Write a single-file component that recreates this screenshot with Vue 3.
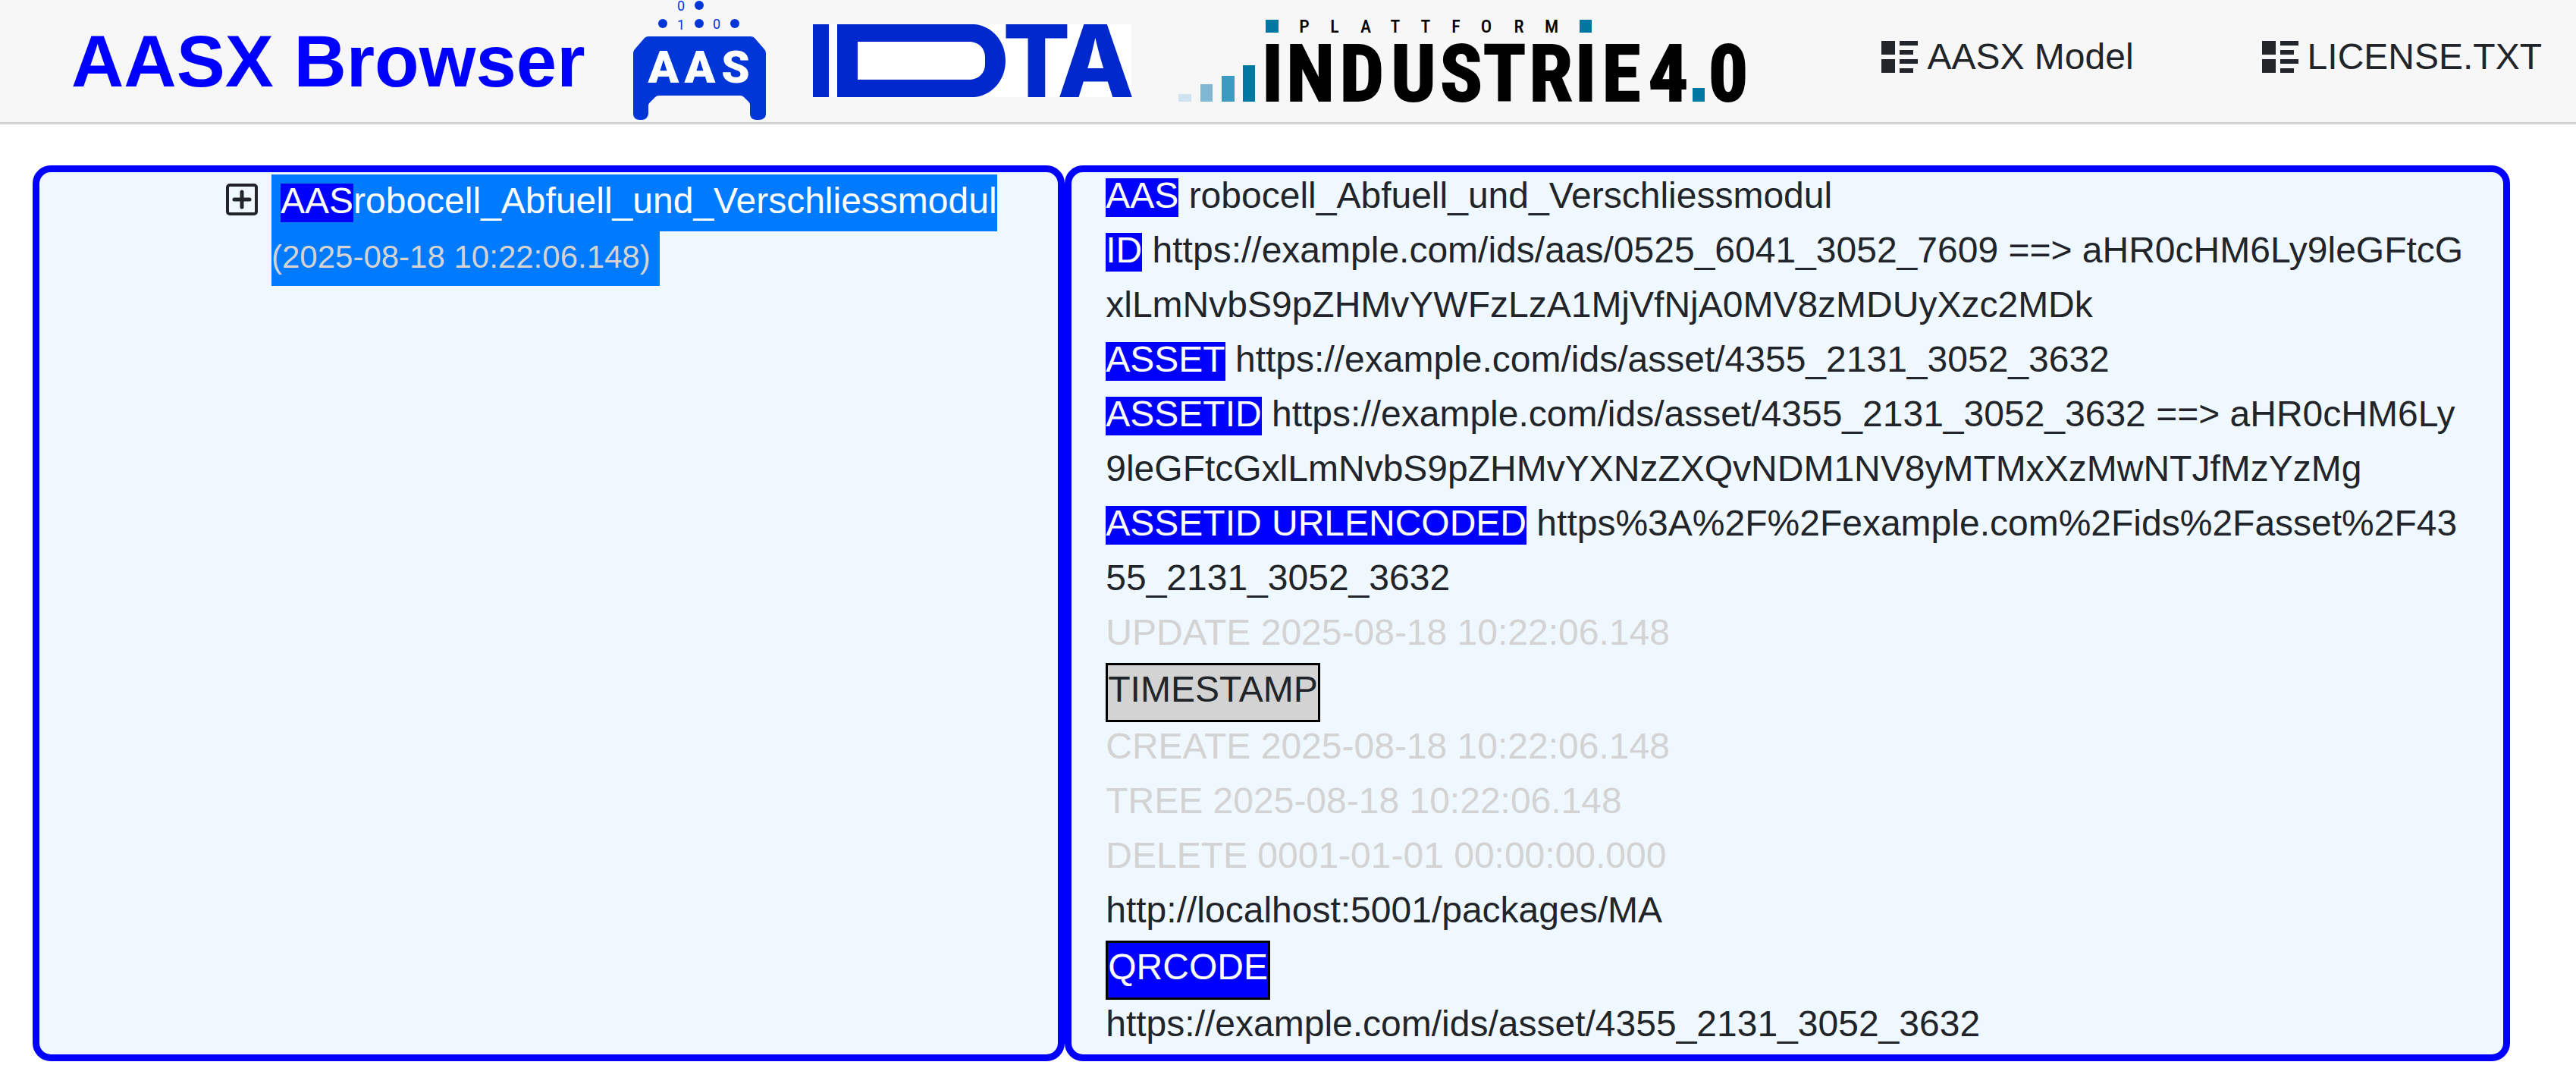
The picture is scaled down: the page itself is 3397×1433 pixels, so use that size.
<script setup>
const industrie = [
  { c: 'I', x: 124 },
  { c: 'N', x: 174 },
  { c: 'D', x: 242 },
  { c: 'U', x: 310 },
  { c: 'S', x: 373 },
  { c: 'T', x: 430 },
  { c: 'R', x: 491 },
  { c: 'I', x: 537 },
  { c: 'E', x: 584 },
  { c: '4', x: 646 },
  { c: '0', x: 725 },
]
const plattform = [
  { c: 'P', x: 166 },
  { c: 'L', x: 206 },
  { c: 'A', x: 247 },
  { c: 'T', x: 286 },
  { c: 'T', x: 326 },
  { c: 'F', x: 366 },
  { c: 'O', x: 406 },
  { c: 'R', x: 449 },
  { c: 'M', x: 492 },
]
const links = ['AASX Model', 'LICENSE.TXT']
const details = [
  { label: 'AAS', value: 'robocell_Abfuell_und_Verschliessmodul' },
  {
    label: 'ID',
    value:
      'https://example.com/ids/aas/0525_6041_3052_7609 ==> aHR0cHM6Ly9leGFtcGxlLmNvbS9pZHMvYWFzLzA1MjVfNjA0MV8zMDUyXzc2MDk',
  },
  { label: 'ASSET', value: 'https://example.com/ids/asset/4355_2131_3052_3632' },
  {
    label: 'ASSETID',
    value:
      'https://example.com/ids/asset/4355_2131_3052_3632 ==> aHR0cHM6Ly9leGFtcGxlLmNvbS9pZHMvYXNzZXQvNDM1NV8yMTMxXzMwNTJfMzYzMg',
  },
  {
    label: 'ASSETID URLENCODED',
    value: 'https%3A%2F%2Fexample.com%2Fids%2Fasset%2F4355_2131_3052_3632',
  },
]
const stamps = [
  'CREATE 2025-08-18 10:22:06.148',
  'TREE 2025-08-18 10:22:06.148',
  'DELETE 0001-01-01 00:00:00.000',
]
</script>

<template>
  <div class="page">
    <header class="topbar">
      <h1 class="brand">AASX Browser</h1>

      <svg class="logo" width="176" height="161" viewBox="0 0 176 161" role="img" aria-label="AAS">
        <g fill="#0036d8">
          <circle cx="88" cy="7" r="6" />
          <circle cx="40" cy="31" r="6" />
          <circle cx="88" cy="31" r="6" />
          <circle cx="135" cy="31" r="6" />
          <path
            d="M21 48H156Q159 48 161 50L174 65Q176 67 176 70V151Q175 158 167 158H163Q155 157 155 150V138Q155 136 153 134L147 128Q145 126 142 126H35Q32 126 30 128L23 135Q21 137 21 139V150Q20 157 13 158H9Q1 157 1 150V70Q1 67 3 65L16 50Q18 48 21 48Z"
          />
          <g class="bits">
            <text x="64" y="14">0</text>
            <text x="64" y="39">1</text>
            <text x="111" y="38">0</text>
          </g>
        </g>
        <g class="aas" fill="#fff">
          <text x="41" y="109">A</text>
          <text x="89" y="109">A</text>
          <text x="136" y="109">S</text>
        </g>
      </svg>

      <svg class="logo" width="420" height="97" viewBox="0 0 420 97" role="img" aria-label="IDTA">
        <rect width="420" height="96" fill="#fff" />
        <g fill="#0028cd">
          <rect width="21" height="96" />
          <path
            fill-rule="evenodd"
            d="M32 0H213C236 2 254 22 254 48C254 74 236 94 213 96H32ZM59 23V73H208C219 72 227 64 227 53V43C227 32 219 24 208 23Z"
          />
          <g class="ta">
            <text x="295" y="96">T</text>
            <text x="373" y="96">A</text>
          </g>
        </g>
      </svg>

      <svg class="logo" width="748" height="109" viewBox="0 0 748 109" role="img" aria-label="Plattform Industrie 4.0">
        <rect x="0" y="98" width="17" height="10" fill="#cfe4f0" />
        <rect x="29" y="85" width="16" height="23" fill="#80b7d3" />
        <rect x="57" y="74" width="17" height="34" fill="#3b9bc1" />
        <g fill="#0076a3">
          <rect x="85" y="60" width="16" height="48" />
          <rect x="115" y="0" width="17" height="17" />
          <rect x="529" y="0" width="16" height="17" />
          <rect x="678" y="90" width="16" height="18" />
        </g>
        <g class="plattform">
          <text v-for="(l, i) in plattform" :key="i" :x="l.x" y="17">{{ l.c }}</text>
        </g>
        <g class="industrie">
          <text v-for="(l, i) in industrie" :key="i" :x="l.x" y="107">{{ l.c }}</text>
        </g>
      </svg>

      <nav class="links">
        <a v-for="name in links" :key="name" href="#">
          <svg width="48" height="42" viewBox="0 0 8 7" aria-hidden="true">
            <path
              fill="currentColor"
              d="M0 0v3h3v-3h-3zm4 0v1h4v-1h-4zm0 2v1h3v-1h-3zm-4 2v3h3v-3h-3zm4 0v1h4v-1h-4zm0 2v1h3v-1h-3z"
            />
          </svg>
          <span>{{ name }}</span>
        </a>
      </nav>
    </header>

    <main class="panels">
      <section class="panel tree">
        <button class="toggle" type="button" aria-label="Expand">
          <svg width="42" height="42" viewBox="0 0 42 42" fill="none" stroke="currentColor" aria-hidden="true">
            <rect x="2" y="2" width="38" height="38" rx="3" stroke-width="4" />
            <path d="M21 11V31M11 21H31" stroke-width="5" stroke-linecap="round" />
          </svg>
        </button>
        <div class="node">
          <div class="node-name"><span class="tag">AAS</span>robocell_Abfuell_und_Verschliessmodul</div>
          <div class="node-time">(2025-08-18 10:22:06.148)</div>
        </div>
      </section>

      <section class="panel detail">
        <div class="lines">
          <p v-for="d in details" :key="d.label"><span class="tag">{{ d.label }}</span> {{ d.value }}</p>
          <p class="muted">UPDATE 2025-08-18 10:22:06.148</p>
          <button class="box gray" type="button">TIMESTAMP</button>
          <p v-for="s in stamps" :key="s" class="muted">{{ s }}</p>
          <p>http://localhost:5001/packages/MA</p>
          <button class="box" type="button">QRCODE</button>
          <p>https://example.com/ids/asset/4355_2131_3052_3632</p>
        </div>
      </section>
    </main>
  </div>
</template>

<style>
body {
  margin: 0;
  background: #fff;
}
</style>

<style scoped>
.page {
  font-family: "Liberation Sans", Arial, sans-serif;
  font-size: 48px;
  line-height: 72px;
  color: #212529;
}

.topbar {
  display: flex;
  align-items: center;
  gap: 62px;
  padding: 0 45px 0 94px;
  background: #f7f7f7;
  border-bottom: 3px solid #d6d5d5;
}

.brand {
  margin: 0;
  font-size: 96px;
  line-height: 105px;
  font-weight: 700;
  color: #00f;
  white-space: nowrap;
}

.logo {
  display: block;
  flex: none;
  overflow: visible;
}

.logo text {
  text-anchor: middle;
}

.bits {
  font: 400 18px Roboto, sans-serif;
}

.aas {
  font: 900 60px Roboto, sans-serif;
}

.ta {
  font: 800 132px Inter, "Liberation Sans", sans-serif;
}

.plattform {
  font: 500 24px "Liberation Sans Narrow", "Roboto Condensed", "Liberation Sans", sans-serif;
}

.industrie {
  font: 700 104px "Liberation Sans Narrow", "Roboto Condensed", "Liberation Sans", sans-serif;
  stroke: #000;
  stroke-width: 2px;
}

.links {
  display: flex;
  gap: 169px;
  margin-left: auto;
  padding-bottom: 11px;
}

.links a {
  display: flex;
  align-items: center;
  gap: 12px;
  color: inherit;
  text-decoration: none;
  white-space: nowrap;
}

.panels {
  display: grid;
  grid-template-columns: 5fr 7fr;
  padding: 54px 87px 32px 43px;
}

.panel {
  box-sizing: border-box;
  min-width: 0;
  border: 9px solid #00f;
  border-radius: 24px;
  background: #f0f8ff;
}

.tree {
  display: flex;
  align-items: flex-start;
  gap: 18px;
  padding: 3px 0 0 246px;
}

.toggle {
  display: block;
  margin: 12px 0 0;
  padding: 0;
  border: 0;
  background: none;
  color: inherit;
}

.toggle svg {
  display: block;
}

.node-name,
.node-time {
  width: fit-content;
  background: #007bff;
  white-space: nowrap;
}

.node-name {
  padding: 0 0 5px 12px;
  line-height: 70px;
  color: #fff;
}

.node-time {
  padding: 0 12px 4px 0;
  font-size: 42px;
  line-height: 68px;
  color: #d3d3d3;
}

.tag {
  display: inline-block;
  padding-bottom: 6px;
  line-height: 45px;
  background: #00f;
  color: #fff;
}

.detail {
  padding: 0 45px;
}

.lines {
  margin-top: -5px;
  padding-bottom: 4px;
  word-break: break-all;
}

.lines p {
  margin: 0;
}

.muted {
  color: #d3d3d3;
}

.box {
  display: block;
  margin: 4px 0 -4px;
  padding: 0 0 8px;
  border: 3px solid #000;
  background: #00f;
  color: #fff;
  font: inherit;
  line-height: 64px;
}

.gray {
  background: #d3d3d3;
  color: #212529;
}
</style>
